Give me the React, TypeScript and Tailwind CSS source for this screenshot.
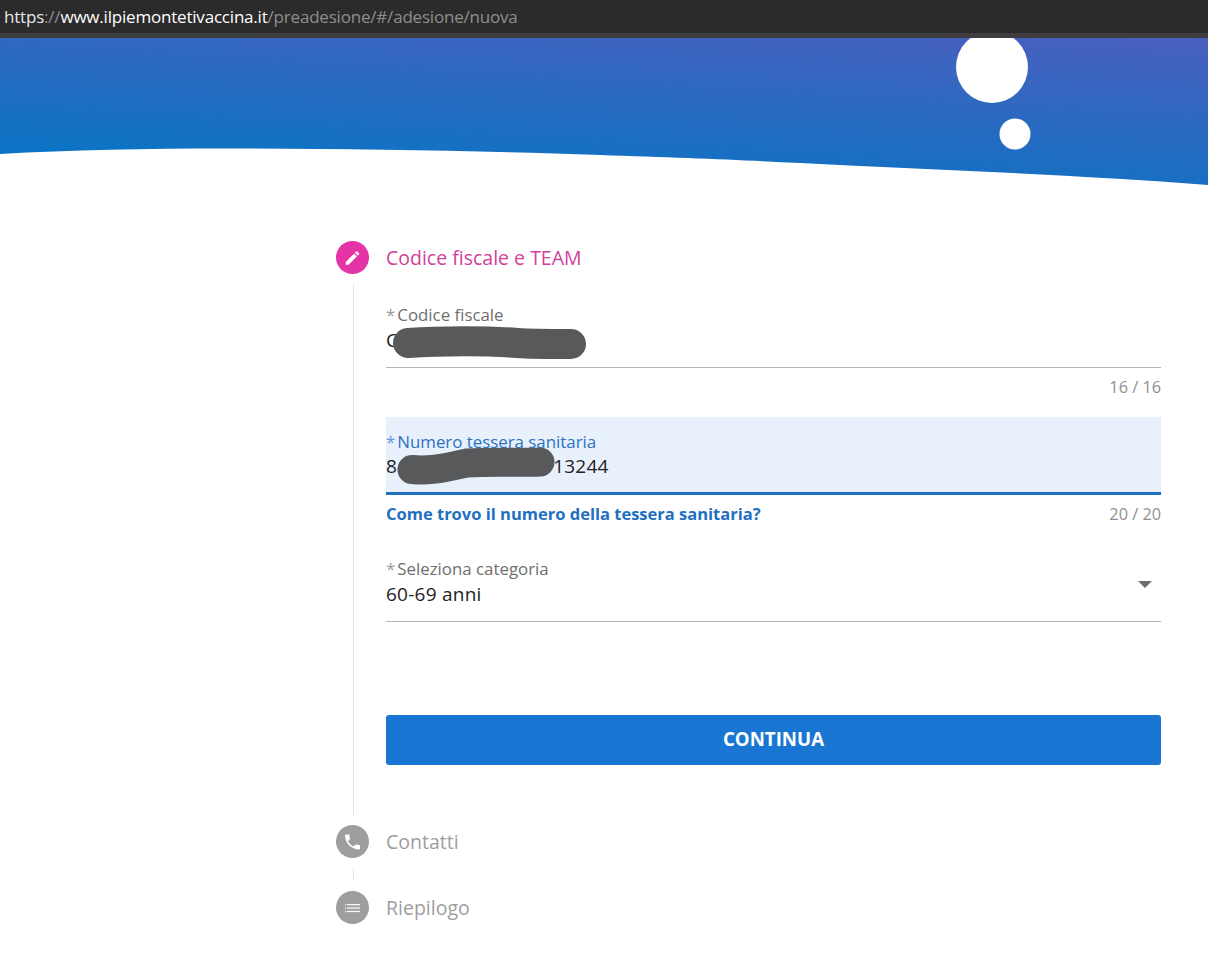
import React from "react";
import { MdEdit, MdPhone } from "react-icons/md";

function Header() {
  return (
    <div className="h-[147px] w-full">
      <svg viewBox="0 0 1208 147" width="1208" height="147" className="block">
        <defs>
          <linearGradient id="hdr" gradientUnits="userSpaceOnUse" x1="0" y1="115" x2="12" y2="-80">
            <stop offset="0" stopColor="#0a74c4" />
            <stop offset="1" stopColor="#4c5fbe" />
          </linearGradient>
        </defs>
        <path d="M0 116 C 70 112 150 110.5 220 110.5 C 350 110.5 480 113 600 117 C 680 119.5 740 122 800 125 C 940 132 1080 137 1208 147 L1208 0 L0 0 Z" fill="url(#hdr)" />
        <circle cx="992" cy="29" r="36" fill="#ffffff" />
        <circle cx="1015" cy="96" r="15.5" fill="#ffffff" />
      </svg>
    </div>
  );
}

function StepHead({ icon, title, active }: { icon: React.ReactNode; title: string; active?: boolean }) {
  return (
    <div className="flex items-center h-[33px]">
      <div className={`w-[33px] h-[33px] rounded-full flex items-center justify-center text-white ${active ? "bg-[#e534a5]" : "bg-[#9e9e9e]"}`}>
        <span className="-translate-x-[0.5px]">{icon}</span>
      </div>
      <span className={`ml-[17px] text-[19.5px] ${active ? "text-[#d03f9b]" : "text-[#9e9e9e]"}`}>{title}</span>
    </div>
  );
}

function Label({ text, color }: { text: string; color: string }) {
  return (
    <div className={`text-[16.85px] leading-[22px] ${color}`}>
      <span className="opacity-70 mr-[2px]">*</span>
      {text}
    </div>
  );
}

function LinesIcon() {
  return (
    <svg className="block" width="16" height="10" viewBox="0 0 16 10" fill="#ffffff">
      <rect x="0.5" y="1" width="1.3" height="1.3" opacity="0.8" />
      <rect x="2.6" y="1" width="13" height="1.3" opacity="0.9" />
      <rect x="0.5" y="4.4" width="1.3" height="1.3" opacity="0.8" />
      <rect x="2.6" y="4.4" width="13" height="1.3" opacity="0.9" />
      <rect x="0.5" y="7.8" width="1.3" height="1.3" opacity="0.8" />
      <rect x="2.6" y="7.8" width="13" height="1.3" opacity="0.9" />
    </svg>
  );
}

export default function App() {
  return (
    <div className="w-[1208px] h-[962px] overflow-hidden bg-white font-['Open_Sans',sans-serif]">
      <div className="h-[33px] bg-[#2b2b2b] pl-1 flex items-center text-[17px] tracking-[-0.2px] text-[#8e8e8e] whitespace-nowrap">
        <span className="text-[#e8e8e8]">https</span>
        <span>://</span>
        <span className="text-white">www.ilpiemontetivaccina.it</span>
        <span>/preadesione/#/adesione/nuova</span>
      </div>
      <div className="h-[5px] bg-[#3e3e40]" />
      <Header />

      <div className="pl-[336px] pt-[56px]">
        <StepHead active title="Codice fiscale e TEAM" icon={<MdEdit size={18} className="block" />} />

        <div className="ml-[17px] mt-[10px] h-[531px] border-l border-[#e2e2e2] pl-[32px] w-[808px]">
          <div className="pt-[20px]">
            <div className="relative h-[64px] border-b border-[#b5b5b5]">
              <Label text="Codice fiscale" color="text-[#6e6e6e]" />
              <div className="text-[19px] tracking-[0.25px] leading-[28px] text-[#222222]">C</div>
              <svg className="absolute left-[6px] top-[21px]" width="202" height="36" viewBox="0 0 202 36">
                <path d="M16 18 C 50 15.5 95 15.5 125 18 C 140 19 160 19 179 19" fill="none" stroke="#58595b" strokeWidth="30" strokeLinecap="round" />
              </svg>
            </div>
            <div className="h-[49px] pt-[8px] text-right text-[16.3px] leading-[22px] text-[#8f8f8f]">16 / 16</div>
          </div>

          <div>
            <div className="relative h-[78px] bg-[#e8f0fb] border-b-[3px] border-[#1f70c1] pt-[14px]">
              <Label text="Numero tessera sanitaria" color="text-[#2a72c3]" />
              <div className="text-[19px] tracking-[0.25px] leading-[28px] -mt-px text-[#222222] flex">
                <span>8</span>
                <span className="ml-[156px]">13244</span>
              </div>
              <svg className="absolute left-[6px] top-[28px]" width="168" height="44" viewBox="0 0 168 44">
                <path d="M20 24.5 C 40 26.5 55 22 75 18 C 100 16.5 130 18 148 17" fill="none" stroke="#58595b" strokeWidth="29" strokeLinecap="round" />
              </svg>
            </div>
            <div className="flex justify-between h-[38px] pt-[8px] leading-[22px]">
              <span className="text-[16.5px] font-bold text-[#1f70c1]">Come trovo il numero della tessera sanitaria?</span>
              <span className="text-[16.3px] text-[#8f8f8f]">20 / 20</span>
            </div>
          </div>

          <div className="relative h-[89px] border-b border-[#b5b5b5] pt-[25px]">
            <Label text="Seleziona categoria" color="text-[#6e6e6e]" />
            <div className="text-[19px] tracking-[0.25px] leading-[28px] text-[#222222]">60-69 anni</div>
            <svg className="absolute right-[9px] top-[48px]" width="14" height="7" viewBox="0 0 14 7">
              <path d="M0 0 H14 L7 7 Z" fill="#6c6c70" />
            </svg>
          </div>

          <button className="mt-[93px] w-full h-[50px] rounded-[3px] bg-[#1976d2] text-white text-[18.7px] font-bold pb-[2px]">CONTINUA</button>
        </div>

        <div className="mt-[10px]">
          <StepHead title="Contatti" icon={<MdPhone size={20} className="block" />} />
        </div>
        <div className="ml-[17px] h-[33px] flex items-center">
          <div className="h-[11px] border-l border-[#e2e2e2]" />
        </div>
        <StepHead title="Riepilogo" icon={<LinesIcon />} />
      </div>
    </div>
  );
}
